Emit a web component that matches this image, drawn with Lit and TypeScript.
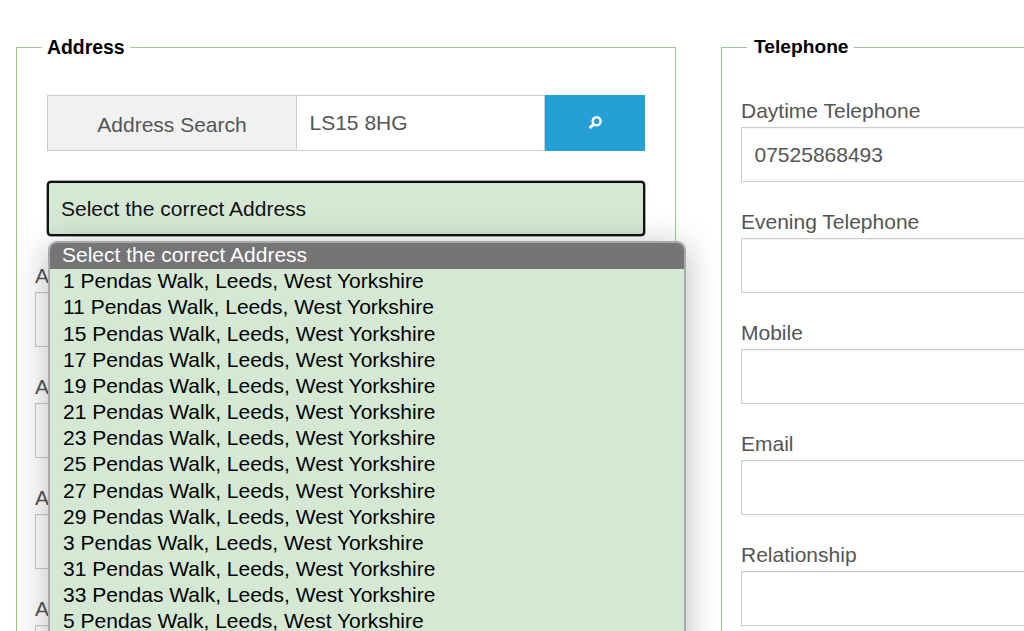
import { LitElement, html, css } from "lit";
import { customElement } from "lit/decorators.js";

const OPTIONS = ["1","11","15","17","19","21","23","25","27","29","3","31","33","5"];

@customElement("app-root")
export class AppRoot extends LitElement {
  static styles = css`
    :host { display: block; position: relative; width: 1024px; height: 631px; overflow: hidden; background: #fff;
      font-family: "Liberation Sans", Arial, sans-serif; font-size: 21px; color: #555; }
    * { box-sizing: border-box; }
    .page { display: flex; gap: 45px; padding: 36px 0 0 16px; width: 1400px; }
    fieldset { flex: none; width: 660px; margin: 0; border: 1px solid #a3c793; padding: 37px 19px 0 18px; min-height: 700px; }
    fieldset.left { border-left-color: #94cb86; }
    legend { margin-left: 7px; padding: 0 5px; font-size: 19.4px; line-height: 22px; font-weight: bold; color: #000; }
    .right legend { margin-left: 6px; padding-left: 7px; padding-right: 5px; font-size: 19.2px; }
    .group { display: flex; height: 56px; margin: 0 11px 30px 12px; width: 598px; }
    .addon { flex: none; width: 250px; background: #f1f1f1; border: 1px solid #ccc; text-align: center; line-height: 57px; }
    .group input { flex: none; width: 248px; height: 56px; border: 1px solid #ccc; border-left: 0; }
    .btn { flex: none; width: 100px; height: 56px; background: #269fd6; border: 0; padding: 0; display: flex; align-items: center; justify-content: center; }
    .btn svg { display: block; }
    input { display: block; font: inherit; color: #555; background: #fff; padding: 0 12.5px; outline: none; border-radius: 0; }
    .select { height: 55px; width: 598px; margin: 0 11px 28px 12px; border: 2px solid #111; border-radius: 4px; background: #d5e8d4; color: #111; padding: 0 12px; line-height: 52px; box-shadow: 0 0 0 .5px #555; }
    .field { margin-bottom: 0; height: 111px; }
    .field label { display: block; line-height: 24px; height: 24px; margin-bottom: 4px; }
    .field input { width: 100%; height: 55px; border: 1px solid #ccc; box-shadow: inset 0 1px 1px rgba(0,0,0,.05); }
    .right { padding: 41px 19px 0 19px; }
    .menu { position: absolute; left: 48px; top: 241px; width: 638px; height: 460px; background: #d5e8d4; border: 2px solid #a9a9a9; border-radius: 9px 9px 0 0; box-shadow: 0 6px 34px rgba(0,0,0,.28); overflow: hidden; color: #000; }
    .menu div { padding-left: 13px; height: 26.18px; line-height: 24px; white-space: nowrap; }
    .menu .head { background: #757575; color: #fff; height: 26.25px; padding-left: 12px; line-height: 24px; }
  `;

  render() {
    return html`
      <div class="page">
        <fieldset class="left">
          <legend>Address</legend>
          <div class="group">
            <span class="addon">Address Search</span>
            <input value="LS15 8HG" />
            <button class="btn" aria-label="Search">
              <svg width="16" height="16" viewBox="0 0 16 16" fill="none" stroke="#fff">
                <circle cx="9.6" cy="6.2" r="4" stroke-width="2.4" />
                <line x1="6.6" y1="9.4" x2="2.6" y2="13" stroke-width="3" />
              </svg>
            </button>
          </div>
          <div class="select">Select the correct Address</div>
          ${["Address 1", "Address 2", "Address 3", "Address 4"].map(l => html`
            <div class="field"><label>${l}</label><input /></div>`)}
        </fieldset>
        <fieldset class="right">
          <legend>Telephone</legend>
          <div class="field"><label>Daytime Telephone</label><input value="07525868493" /></div>
          <div class="field"><label>Evening Telephone</label><input /></div>
          <div class="field"><label>Mobile</label><input /></div>
          <div class="field"><label>Email</label><input /></div>
          <div class="field"><label>Relationship</label><input /></div>
        </fieldset>
      </div>
      <div class="menu">
        <div class="head">Select the correct Address</div>
        ${OPTIONS.map(n => html`<div>${n} Pendas Walk, Leeds, West Yorkshire</div>`)}
      </div>
    `;
  }
}
